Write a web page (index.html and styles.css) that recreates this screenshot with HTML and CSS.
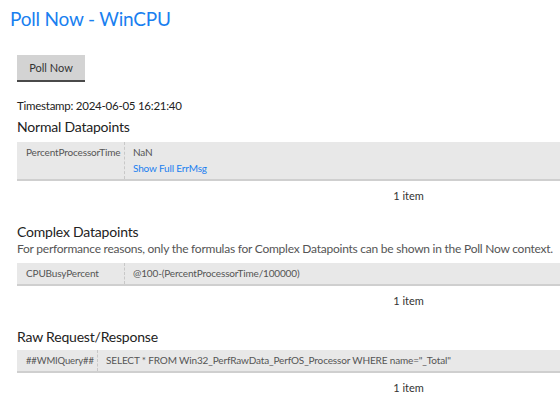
FILE: index.html
```html
<!DOCTYPE html>
<html>
<head>
<meta charset="utf-8">
<link rel="stylesheet" href="styles.css">
</head>
<body>
<h1 class="title">Poll Now - WinCPU</h1>
<div class="content">
  <button class="poll-btn">Poll Now</button>
  <div class="timestamp">Timestamp: 2024-06-05 16:21:40</div>

  <section class="section first">
    <h2 class="section-title">Normal Datapoints</h2>
    <div class="grid">
      <div class="row">
        <div class="cell key w107">PercentProcessorTime</div>
        <div class="cell val">
          <div>NaN</div>
          <a class="link">Show Full ErrMsg</a>
        </div>
      </div>
    </div>
    <div class="footer">1 item</div>
  </section>

  <section class="section">
    <h2 class="section-title">Complex Datapoints</h2>
    <p class="desc">For performance reasons, only the formulas for Complex Datapoints can be shown in the Poll Now context.</p>
    <div class="grid">
      <div class="row">
        <div class="cell key w107">CPUBusyPercent</div>
        <div class="cell val">@100-(PercentProcessorTime/100000)</div>
      </div>
    </div>
    <div class="footer">1 item</div>
  </section>

  <section class="section">
    <h2 class="section-title">Raw Request/Response</h2>
    <div class="grid tight">
      <div class="row">
        <div class="cell key w80 small">##WMIQuery##</div>
        <div class="cell val">SELECT * FROM Win32_PerfRawData_PerfOS_Processor WHERE name="_Total"</div>
      </div>
    </div>
    <div class="footer">1 item</div>
  </section>
</div>
</body>
</html>
```
FILE: styles.css
```css
html, body {
  margin: 0;
  padding: 0;
  overflow: hidden;
  background: #fff;
}
body {
  font-family: Lato, "Open Sans", sans-serif;
  color: #333;
  width: 800px;
}
.title {
  margin: 0;
  padding: 7px 0 0 10px;
  font-size: 19px;
  letter-spacing: -0.2px;
  font-weight: 400;
  line-height: 24px;
  color: #1a7ff0;
}
.content {
  padding-left: 17px;
}
.poll-btn {
  display: block;
  margin-top: 24px;
  width: 68px;
  height: 27px;
  padding: 0;
  border: none;
  border-bottom: 2px solid #4a4a4a;
  background: #d3d3d3;
  font-family: inherit;
  font-size: 11px;
  color: #333;
}
.timestamp {
  margin-top: 16px;
  font-size: 11.5px;
  letter-spacing: -0.25px;
  line-height: 15px;
  color: #222;
}
.section {
  margin-top: 20px;
}
.section.first {
  margin-top: 5px;
}
.section-title {
  margin: 0;
  font-size: 14px;
  letter-spacing: -0.2px;
  font-weight: 400;
  line-height: 18px;
  color: #222;
}
.desc {
  margin: 0;
  font-size: 12px;
  letter-spacing: -0.24px;
  line-height: 16px;
  color: #555;
}
.grid {
  width: 752px;
  margin-top: 6px;
  background: #e8e8e8;
  border-bottom: 2px solid #cfcfcf;
}
.grid.tight {
  margin-top: 4px;
}
.row {
  display: flex;
}
.cell {
  font-size: 10px;
  letter-spacing: -0.15px;
  line-height: 15px;
  color: #555;
  padding: 3px 8px 3px 9px;
}
.key {
  box-sizing: border-box;
  border-right: 1px dashed #c8c8c8;
  flex: none;
  white-space: nowrap;
}
.w107 { width: 108px; }
.w80 { width: 81px; }
.small { font-size: 9.5px; letter-spacing: -0.15px; }
.val {
  padding-left: 8px;
}
.link {
  display: block;
  margin-top: 1px;
  color: #1a7ff0;
}
.footer {
  text-align: center;
  font-size: 11px;
  line-height: 15px;
  color: #333;
  margin-top: 7px;
}
```
